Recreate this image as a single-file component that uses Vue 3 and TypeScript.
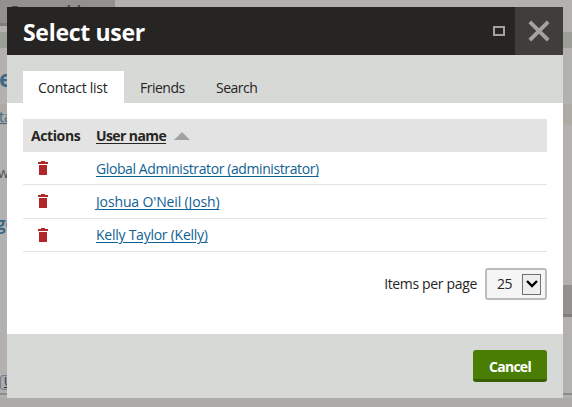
<script setup lang="ts">
import { ref } from 'vue'

interface User {
  id: number
  label: string
}

const tabs: string[] = ['Contact list', 'Friends', 'Search']
const activeTab = ref<string>(tabs[0])
const users: User[] = [
  { id: 1, label: 'Global Administrator (administrator)' },
  { id: 2, label: "Joshua O'Neil (Josh)" },
  { id: 3, label: 'Kelly Taylor (Kelly)' },
]
const pageSize = ref<number>(25)
</script>

<template>
  <div class="screen">
    <div class="page" aria-hidden="true">
      <div class="page-tab">Page model</div>
      <div class="page-band"></div>
      <div class="page-title">e</div>
      <div class="page-crumb">ta</div>
      <div class="page-text">w</div>
      <div class="page-subtitle">ge</div>
      <div class="page-button"></div>
      <div class="page-tools"><span class="tool">U</span></div>
      <div class="page-foot"></div>
    </div>

    <section class="dialog" role="dialog" aria-label="Select user">
      <header class="title-bar">
        <h1>Select user</h1>
        <button class="maximize" aria-label="Maximize"><span></span></button>
        <button class="close" aria-label="Close">
          <svg width="22" height="22" viewBox="0 0 22 22">
            <path d="M1.8 1.8 L20.2 20.2 M20.2 1.8 L1.8 20.2" fill="none" stroke="#a3a2a1" stroke-width="3.9" />
          </svg>
        </button>
      </header>

      <nav class="tabs">
        <button
          v-for="tab in tabs"
          :key="tab"
          class="tab"
          :class="[{ active: tab === activeTab }, tab.toLowerCase().replace(' ', '-')]"
          @click="activeTab = tab"
        >{{ tab }}</button>
      </nav>

      <main class="content">
        <div class="grid">
          <div class="row head">
            <span class="cell">Actions</span>
            <span class="cell sort"><a>User name</a><i class="arrow"></i></span>
          </div>
          <div v-for="user in users" :key="user.id" class="row" :class="'user-' + user.id">
            <span class="cell action">
              <svg width="10" height="14" viewBox="0 0 10 14" fill="#b12628" shape-rendering="crispEdges">
                <path d="M0 1 H3 V0 H7 V1 H10 V3 H0 Z M1 4 H9 V14 H1 Z" />
              </svg>
            </span>
            <span class="cell"><a class="link">{{ user.label }}</a></span>
          </div>
        </div>
        <div class="pager">
          <span class="pager-label">Items per page</span>
          <div class="select">
            <span class="value">{{ pageSize }}</span>
            <span class="drop">
              <svg width="12" height="8" viewBox="0 0 12 8">
                <path d="M1 1 L6 6 L11 1" fill="none" stroke="#000" stroke-width="2.4" />
              </svg>
            </span>
          </div>
        </div>
      </main>

      <footer class="footer"><button class="cancel">Cancel</button></footer>
    </section>
  </div>
</template>

<style>
body { overflow: hidden; }
</style>

<style scoped>
* { box-sizing: border-box; }
.screen {
  position: relative;
  width: 572px;
  height: 407px;
  overflow: hidden;
  font: 14px/20px "Open Sans", "Noto Sans", sans-serif;
  color: #262524;
}
button { border: 0; margin: 0; padding: 0; font: inherit; color: inherit; background: none; }
a { text-decoration: none; }

.page {
  display: flex;
  flex-direction: column;
  height: 407px;
  background: #b3b1af;
  color: #555351;
}
.page > div { flex: none; }
.page-tab { width: 115px; height: 26px; margin-bottom: 6px; padding-left: 11px; line-height: 22px; background: #94908e; border-bottom: 3px solid #807e7c; font-weight: 700; letter-spacing: -1.2px; color: #4a4846; }
.page-band { height: 16px; background: #9c9e98; }
.page-title { height: 56px; line-height: 61px; font-size: 23px; font-weight: 700; color: #3b6a87; margin-left: -1px; }
.page-crumb { height: 21px; line-height: 26px; background: #aeaba4; color: #3b6a87; text-decoration: underline; margin-left: -1px; }
.page-text { height: 75px; line-height: 95px; margin-left: -2px; }
.page-subtitle { height: 50px; line-height: 48px; font-size: 17px; font-weight: 700; color: #3b6a87; margin-left: -4px; }
.page-button { align-self: flex-end; width: 40px; height: 32px; margin-top: 35px; background: #94908e; border-bottom: 3px solid #807e7c; }
.page-tools { height: 78px; padding-top: 58px; border-bottom: 2px solid #8e8c8a; }
.tool { display: block; width: 18px; height: 15px; border: 1px solid #6c819a; border-radius: 3px; padding-left: 3px; background: #a8a9aa; line-height: 12px; font-size: 12px; text-decoration: underline; color: #333; }
.page-foot { height: 9px; margin-top: 3px; background: #adaba9; }

.dialog {
  position: absolute;
  left: 7px;
  top: 7px;
  width: 556px;
  height: 391px;
  display: flex;
  flex-direction: column;
  background: #fff;
}
.title-bar { display: flex; height: 48px; background: #262524; color: #fff; }
h1 { flex: 1; margin: 0; padding-left: 16px; font-size: 23px; line-height: 51px; font-weight: 700; letter-spacing: -0.3px; }
.maximize { display: flex; align-items: center; justify-content: center; width: 32px; }
.maximize span { width: 12px; height: 10px; border: 2px solid #a3a2a1; }
.close { display: flex; align-items: center; justify-content: center; width: 48px; background: #403e3d; }
.close svg { display: block; }

.tabs { display: flex; height: 48px; padding: 16px 16px 0; background: #d6d9d6; }
.tab { height: 32px; padding: 2px 0 0 16px; line-height: 30px; white-space: nowrap; text-align: left; }
.tab.active { background: #fff; }
.tab.contact-list { width: 101px; padding-left: 15px; letter-spacing: -0.27px; }
.tab.friends { width: 77px; letter-spacing: -0.5px; }
.tab.search { padding-left: 15px; letter-spacing: -0.5px; }

.content { height: 231px; padding: 16px 16px 0; }
.row { display: grid; grid-template-columns: 65px 1fr; height: 33px; border-bottom: 1px solid #e3e3e3; }
.row.user-2 { height: 34px; }
.cell { padding-left: 8px; line-height: 33px; white-space: nowrap; letter-spacing: -0.4px; }
.head { background: #e3e3e3; font-weight: 700; }
.sort { display: flex; align-items: center; letter-spacing: -0.6px; }
.sort a, .link { text-decoration: underline; text-decoration-thickness: 1px; text-underline-offset: 2px; }
.arrow { margin-left: 8px; border: 8px solid transparent; border-top: 0; border-bottom-color: #a3a2a1; }
.action { padding: 9px 0 0 15px; line-height: 0; }
.link { color: #0f6194; }
.user-2 .link { letter-spacing: -0.14px; }
.user-3 .link { letter-spacing: -0.25px; }
.user-3 .cell:last-child { line-height: 31px; }

.pager { display: flex; justify-content: flex-end; align-items: center; gap: 8px; margin-top: 16px; }
.pager-label { letter-spacing: -0.34px; }
.select { display: flex; align-items: center; justify-content: space-between; width: 62px; height: 32px; padding: 0 4px 0 10px; border: 2px solid #bdbbbb; border-radius: 3px; background: #f5f5f5; }
.value { letter-spacing: -0.4px; }
.drop { display: flex; align-items: center; justify-content: center; width: 19px; height: 21px; border: 1px solid #707070; background: #eee; }

.footer { display: flex; justify-content: flex-end; height: 64px; padding: 16px; background: #d6d9d6; }
.cancel { width: 74px; height: 32px; border-radius: 3px; border-bottom: 3px solid #376006; background: #497d04; color: #fff; font-weight: 700; padding-top: 5px; letter-spacing: -0.75px; }
</style>
